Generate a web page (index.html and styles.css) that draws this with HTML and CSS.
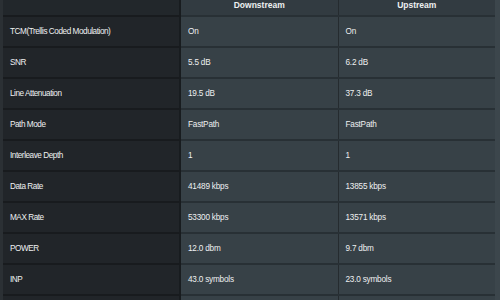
FILE: index.html
```
<!DOCTYPE html>
<html lang="en">
<head>
    <meta charset="UTF-8">
    <meta name="viewport" content="width=device-width, initial-scale=1.0">
    <title>DSL Line Status</title>
    <link rel="stylesheet" href="styles.css">
</head>
<body>
    <div class="panel">
    <table class="stats">
        <tr class="head">
            <th class="name"></th>
            <th>Downstream</th>
            <th>Upstream</th>
        </tr>
        <tr><td class="name">TCM(Trellis Coded Modulation)</td><td>On</td><td>On</td></tr>
        <tr><td class="name">SNR</td><td>5.5 dB</td><td>6.2 dB</td></tr>
        <tr><td class="name">Line Attenuation</td><td>19.5 dB</td><td>37.3 dB</td></tr>
        <tr><td class="name">Path Mode</td><td>FastPath</td><td>FastPath</td></tr>
        <tr><td class="name">Interleave Depth</td><td>1</td><td>1</td></tr>
        <tr><td class="name">Data Rate</td><td>41489 kbps</td><td>13855 kbps</td></tr>
        <tr><td class="name">MAX Rate</td><td>53300 kbps</td><td>13571 kbps</td></tr>
        <tr><td class="name">POWER</td><td>12.0 dbm</td><td>9.7 dbm</td></tr>
        <tr><td class="name">INP</td><td>43.0 symbols</td><td>23.0 symbols</td></tr>
        <tr><td class="name"></td><td></td><td></td></tr>
    </table>
    </div>
</body>
</html>
```

FILE: styles.css
```
        body{
            margin: 0;
            background-color: #2a3035;
            font-family: 'Liberation Sans', Arial, sans-serif;
        }
        .panel{
            height: 300px;
            overflow: hidden;
            padding-left: 3px;
            padding-right: 5px;
            background: linear-gradient(90deg, #2b3034 0, #2b3034 3px, #3c464c 3px);
        }
        .stats{
            width: 100%;
            border-collapse: collapse;
            table-layout: fixed;
        }
        .stats td, .stats th{
            box-sizing: border-box;
            height: 31px;
            padding: 0 0 0 7px;
            font-size: 8.2px;
            letter-spacing: -0.2px;
            color: #eef0f1;
            text-align: left;
            background-color: #374147;
            border-bottom: 2px solid #283035;
            border-left: 1px solid #252b2f;
        }
        .stats .name{
            width: 177px;
            letter-spacing: -0.45px;
            background-color: #212529;
            border-bottom-color: #181b1e;
            border-left: none;
            border-right: 2px solid #181c1f;
        }
        .stats tr > :nth-child(3){
            width: 157px;
        }
        .head th{
            height: 16px;
            padding: 0;
            font-size: 8.5px;
            letter-spacing: 0;
            font-weight: bold;
            text-align: center;
            vertical-align: top;
            line-height: 10px;
            background-color: #323b41;
        }
        .head th.name{
            background-color: #22272b;
        }
```
